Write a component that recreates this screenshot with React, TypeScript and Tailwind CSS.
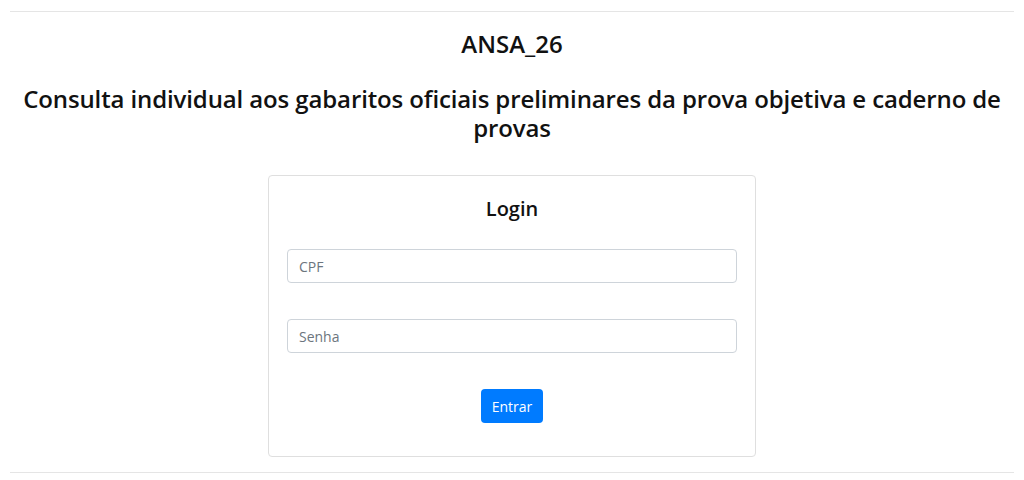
export default function App() {
  return (
    <div
      className="min-h-[480px] bg-white px-[10px] pt-[11px] text-[#111]"
      style={{ fontFamily: "'Open Sans', 'Noto Sans', sans-serif" }}
    >
      <hr className="border-0 border-t border-[#e5e5e5]" />

      {/* Titles */}
      <h2 className="mt-[17px] text-center text-[24px] font-semibold leading-[29px]">
        ANSA_26
      </h2>
      <h2 className="mt-[26px] text-center text-[24px] font-semibold leading-[29px] tracking-[-0.12px]">
        Consulta individual aos gabaritos oficiais preliminares da prova objetiva e caderno de provas
      </h2>

      {/* Card */}
      <div className="mx-auto mt-[33px] w-[488px] rounded border border-[#dfdfdf] px-[18px] pt-[19px] pb-[33px]">
        <h3 className="text-center text-[20px] font-semibold leading-[28px]">
          Login
        </h3>

        <form className="mt-[26px] flex flex-col" onSubmit={(e) => e.preventDefault()}>
          <input
            type="text"
            placeholder="CPF"
            className="h-[34px] w-full rounded border border-[#ced4da] px-[11px] text-[14px] outline-none placeholder:text-[#6c757d]"
          />
          <input
            type="password"
            placeholder="Senha"
            className="mt-[36px] h-[34px] w-full rounded border border-[#ced4da] px-[11px] text-[14px] outline-none placeholder:text-[#6c757d]"
          />
          <div className="mt-[36px] flex justify-center">
            <button className="h-[34px] w-[62px] rounded bg-[#007bff] text-[14px] text-white">
              Entrar
            </button>
          </div>
        </form>
      </div>

      <hr className="mt-[15px] border-0 border-t border-[#e5e5e5]" />
    </div>
  );
}
